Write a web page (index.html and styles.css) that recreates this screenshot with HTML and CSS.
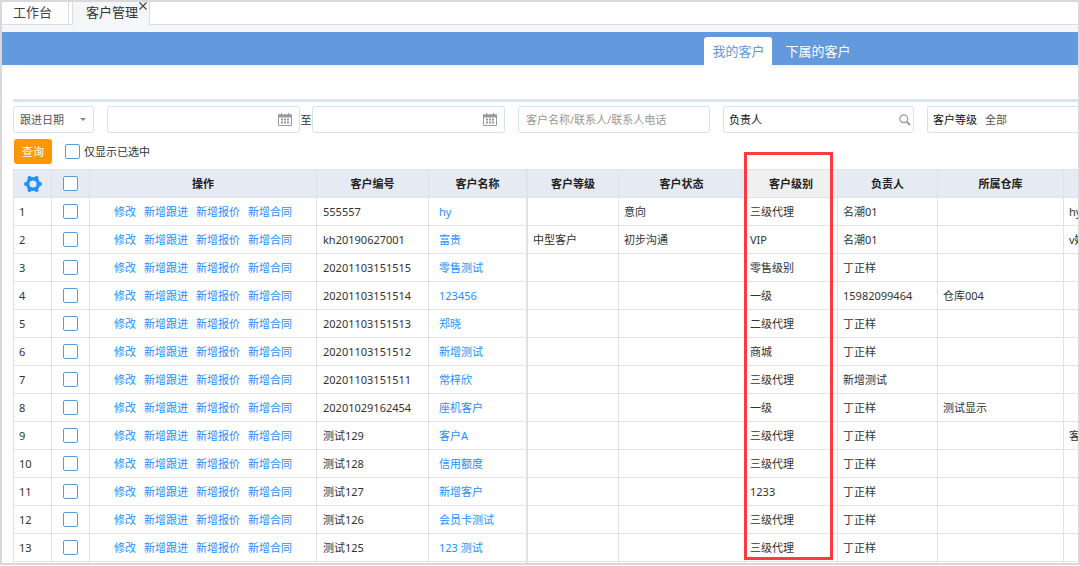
FILE: index.html
```html
<!DOCTYPE html>
<html lang="zh-CN">
<head>
<meta charset="utf-8">
<title>客户管理</title>
<link rel="stylesheet" href="styles.css">
</head>
<body>
<div class="window">
  <nav class="tabs">
    <a class="tab" href="#">工作台</a>
    <div class="tab tab-active"><a href="#">客户管理</a><button class="tab-close" type="button" aria-label="关闭"><svg viewBox="0 0 8 8" width="8" height="8"><path d="M.5.5l7 7M7.5.5l-7 7" stroke="#444" stroke-width="1.200" fill="none"/></svg></button></div>
  </nav>
  <nav class="banner">
    <a class="view view-active" href="#">我的客户</a>
    <a class="view" href="#">下属的客户</a>
  </nav>
  <main class="content">
    <form class="filters">
      <div class="field kind"><select class="kind-select" aria-label="日期类型"><option>跟进日期</option></select><span class="caret"></span></div>
      <label class="field date"><input type="text" aria-label="开始日期"><svg class="cal" viewBox="0 0 14 13" width="14" height="13"><path d="M.5 2h13v10.500h-13z" fill="none" stroke="#999"/><path d="M0 1.500h14V4.500H0zM3 0h1v2H3zM10 0h1v2h-1z" fill="#999"/><path d="M3 6.500h8M3 9.500h8" stroke="#999" stroke-width="2" stroke-dasharray="2 1" fill="none"/></svg></label>
      <span class="to">至</span>
      <label class="field date"><input type="text" aria-label="结束日期"><svg class="cal" viewBox="0 0 14 13" width="14" height="13"><path d="M.5 2h13v10.500h-13z" fill="none" stroke="#999"/><path d="M0 1.500h14V4.500H0zM3 0h1v2H3zM10 0h1v2h-1z" fill="#999"/><path d="M3 6.500h8M3 9.500h8" stroke="#999" stroke-width="2" stroke-dasharray="2 1" fill="none"/></svg></label>
      <div class="field keyword"><input type="text" aria-label="关键字" placeholder="客户名称/联系人/联系人电话"></div>
      <label class="field owner"><span>负责人</span><input type="text"><svg class="search" viewBox="0 0 12 12" width="12" height="12"><circle cx="4.700" cy="4.700" r="3.900" fill="none" stroke="#999" stroke-width="1.200"/><path d="M7.600 7.600l3.400 3.400" stroke="#999" stroke-width="2" fill="none"/></svg></label>
      <label class="field level"><span>客户等级</span><input type="text" value="全部"></label>
    </form>
    <div class="actions">
      <button class="query" type="button">查询</button>
      <label class="only"><input type="checkbox">仅显示已选中</label>
    </div>
    <div class="grid">
      <table>
        <colgroup><col class="w-no"><col class="w-check"><col class="w-ops"><col class="w-code"><col class="w-name"><col class="w-level"><col class="w-state"><col class="w-grade"><col class="w-owner"><col class="w-store"><col class="w-rest"></colgroup>
        <thead>
          <tr><th><button class="gear" type="button" aria-label="设置"><svg viewBox="0 0 18 18" width="18" height="18"><g fill="none" stroke="#1e90ff"><circle cx="9" cy="9" r="5.300" stroke-width="3.400"/><path stroke-width="4" stroke-linecap="round" d="M5.500 3l.6 1M12.500 3l-.6 1M2 9h1M16 9h-1M5.500 15l.6-1M12.500 15l-.6-1"/></g></svg></button></th><th><input type="checkbox" aria-label="全选"></th><th>操作</th><th>客户编号</th><th>客户名称</th><th>客户等级</th><th>客户状态</th><th class="marked">客户级别<span class="marker"></span></th><th>负责人</th><th>所属仓库</th><th></th></tr>
        </thead>
        <tbody>
          <tr><td>1</td><td><input type="checkbox" aria-label="选择第1行"></td><td><a href="#">修改</a><a href="#">新增跟进</a><a href="#">新增报价</a><a href="#">新增合同</a></td><td>555557</td><td><a href="#">hy</a></td><td></td><td>意向</td><td>三级代理</td><td>名潮01</td><td></td><td>hy</td></tr>
          <tr><td>2</td><td><input type="checkbox" aria-label="选择第2行"></td><td><a href="#">修改</a><a href="#">新增跟进</a><a href="#">新增报价</a><a href="#">新增合同</a></td><td>kh20190627001</td><td><a href="#">富贵</a></td><td>中型客户</td><td>初步沟通</td><td>VIP</td><td>名潮01</td><td></td><td>v姣</td></tr>
          <tr><td>3</td><td><input type="checkbox" aria-label="选择第3行"></td><td><a href="#">修改</a><a href="#">新增跟进</a><a href="#">新增报价</a><a href="#">新增合同</a></td><td>20201103151515</td><td><a href="#">零售测试</a></td><td></td><td></td><td>零售级别</td><td>丁正样</td><td></td><td></td></tr>
          <tr><td>4</td><td><input type="checkbox" aria-label="选择第4行"></td><td><a href="#">修改</a><a href="#">新增跟进</a><a href="#">新增报价</a><a href="#">新增合同</a></td><td>20201103151514</td><td><a href="#">123456</a></td><td></td><td></td><td>一级</td><td>15982099464</td><td>仓库004</td><td></td></tr>
          <tr><td>5</td><td><input type="checkbox" aria-label="选择第5行"></td><td><a href="#">修改</a><a href="#">新增跟进</a><a href="#">新增报价</a><a href="#">新增合同</a></td><td>20201103151513</td><td><a href="#">郑晓</a></td><td></td><td></td><td>二级代理</td><td>丁正样</td><td></td><td></td></tr>
          <tr><td>6</td><td><input type="checkbox" aria-label="选择第6行"></td><td><a href="#">修改</a><a href="#">新增跟进</a><a href="#">新增报价</a><a href="#">新增合同</a></td><td>20201103151512</td><td><a href="#">新增测试</a></td><td></td><td></td><td>商城</td><td>丁正样</td><td></td><td></td></tr>
          <tr><td>7</td><td><input type="checkbox" aria-label="选择第7行"></td><td><a href="#">修改</a><a href="#">新增跟进</a><a href="#">新增报价</a><a href="#">新增合同</a></td><td>20201103151511</td><td><a href="#">常梓欣</a></td><td></td><td></td><td>三级代理</td><td>新增测试</td><td></td><td></td></tr>
          <tr><td>8</td><td><input type="checkbox" aria-label="选择第8行"></td><td><a href="#">修改</a><a href="#">新增跟进</a><a href="#">新增报价</a><a href="#">新增合同</a></td><td>20201029162454</td><td><a href="#">座机客户</a></td><td></td><td></td><td>一级</td><td>丁正样</td><td>测试显示</td><td></td></tr>
          <tr><td>9</td><td><input type="checkbox" aria-label="选择第9行"></td><td><a href="#">修改</a><a href="#">新增跟进</a><a href="#">新增报价</a><a href="#">新增合同</a></td><td>测试129</td><td><a href="#">客户A</a></td><td></td><td></td><td>三级代理</td><td>丁正样</td><td></td><td>客</td></tr>
          <tr><td>10</td><td><input type="checkbox" aria-label="选择第10行"></td><td><a href="#">修改</a><a href="#">新增跟进</a><a href="#">新增报价</a><a href="#">新增合同</a></td><td>测试128</td><td><a href="#">信用额度</a></td><td></td><td></td><td>三级代理</td><td>丁正样</td><td></td><td></td></tr>
          <tr><td>11</td><td><input type="checkbox" aria-label="选择第11行"></td><td><a href="#">修改</a><a href="#">新增跟进</a><a href="#">新增报价</a><a href="#">新增合同</a></td><td>测试127</td><td><a href="#">新增客户</a></td><td></td><td></td><td>1233</td><td>丁正样</td><td></td><td></td></tr>
          <tr><td>12</td><td><input type="checkbox" aria-label="选择第12行"></td><td><a href="#">修改</a><a href="#">新增跟进</a><a href="#">新增报价</a><a href="#">新增合同</a></td><td>测试126</td><td><a href="#">会员卡测试</a></td><td></td><td></td><td>三级代理</td><td>丁正样</td><td></td><td></td></tr>
          <tr><td>13</td><td><input type="checkbox" aria-label="选择第13行"></td><td><a href="#">修改</a><a href="#">新增跟进</a><a href="#">新增报价</a><a href="#">新增合同</a></td><td>测试125</td><td><a href="#">123 测试</a></td><td></td><td></td><td>三级代理</td><td>丁正样</td><td></td><td></td></tr>
          <tr><td></td><td></td><td></td><td></td><td></td><td></td><td></td><td></td><td></td><td></td><td></td></tr>
        </tbody>
      </table>
    </div>
  </main>
</div>
</body>
</html>
```
FILE: styles.css
```css
* { box-sizing: border-box; }

body {
  margin: 0;
  font: 11px/16px "Noto Sans", "Noto Sans CJK SC", sans-serif;
  color: #333;
}

a { color: #1e90ff; text-decoration: none; }

button {
  border: 0;
  padding: 0;
  background: none;
  font: inherit;
}

input[type="text"] {
  flex: 1;
  min-width: 0;
  width: 100%;
  border: 0;
  padding: 0;
  background: none;
  font: inherit;
  color: #555;
  outline: 0;
}

input::placeholder { color: #999; }

input[type="checkbox"] {
  appearance: none;
  display: block;
  width: 15px;
  height: 15px;
  margin: 0;
  border: 1px solid #5b9ae0;
  border-radius: 2px;
  background: #fff;
}

.window {
  height: calc(100vh - 1px);
  overflow: hidden;
  border: 2px solid #d9d9d9;
  background: #fff;
}

/* Page tabs */
.tabs {
  display: flex;
  gap: 3px;
  height: 23px;
  border-bottom: 1px solid #ddd;
}

.tab {
  display: flex;
  height: 22px;
  padding: 0 16px 0 11px;
  border-right: 1px solid #ddd;
  font-size: 13px;
  line-height: 20px;
  color: #444;
}

.tab-active {
  height: 23px;
  padding: 0 2px 0 13px;
  border-left: 1px solid #ddd;
  background: #f5f6fa;
}

.tab-active a { color: #333; }

.tab-close {
  width: 8px;
  height: 8px;
  margin-left: 1px;
  line-height: 0;
}

/* Blue view switcher */
.banner {
  display: flex;
  justify-content: flex-start;
  height: 43px;
  padding: 5px 0 0 calc(65% + 3px);
  border-top: 7px solid #f5f6fa;
  border-bottom: 3px solid #f5f6fa;
  background: #629add;
}

.view {
  height: 28px;
  padding: 0 8px;
  border-radius: 3px 3px 0 0;
  font-size: 13px;
  line-height: 28px;
  color: #fff;
}

.view + .view { margin-left: 5px; }

.view-active {
  height: 31px;
  background: #fff;
  color: #629add;
}

.content { padding: 31px 0 0 11px; }

/* Filters */
.filters {
  display: flex;
  align-items: center;
  padding-top: 4px;
  border-top: 3px solid #d8e4ef;
}

.field {
  display: flex;
  flex: none;
  align-items: center;
  height: 27px;
  padding: 0 7px;
  border: 1px solid #d5e3f0;
  border-radius: 3px;
}

.kind {
  width: 81px;
  margin-right: 13px;
  padding: 0 7px 0 6px;
}

.kind-select {
  flex: 1;
  min-width: 0;
  appearance: none;
  border: 0;
  padding: 0;
  background: none;
  font: inherit;
  color: #555;
}

.caret {
  border: 3px solid transparent;
  border-top-color: #888;
  border-bottom: 0;
}

.date { width: 193px; }
.to { width: 12px; text-align: center; }
.keyword { width: 192px; margin: 0 13px; }

.owner {
  width: 191px;
  margin-right: 13px;
  padding: 0 2px 0 5px;
  color: #111;
}

.level {
  flex: 1;
  gap: 8px;
  padding-left: 5px;
  border-right: 0;
  border-radius: 3px 0 0 3px;
  color: #111;
}

.actions {
  display: flex;
  align-items: center;
  gap: 13px;
  padding: 6px 0 5px 1px;
}

.query {
  width: 38px;
  height: 25px;
  border-radius: 3px;
  background: #ff9800;
  color: #fff;
}

.only {
  display: flex;
  align-items: center;
  gap: 4px;
}

/* Customer table */
table {
  width: 1178px;
  table-layout: fixed;
  border-spacing: 0;
  border-top: 1px solid #e0e2e7;
  border-left: 1px solid #e0e2e7;
}

.w-no { width: 38px; }
.w-check { width: 38px; }
.w-ops { width: 227px; }
.w-code { width: 112px; }
.w-name { width: 99px; }
.w-level { width: 91px; }
.w-state { width: 126px; }
.w-grade { width: 93px; }
.w-owner { width: 100px; }
.w-store { width: 126px; }

th, td {
  height: 28px;
  padding: 0 5px;
  border-right: 1px solid #e0e2e7;
  border-bottom: 1px solid #e0e2e7;
  text-align: left;
  white-space: nowrap;
}

th {
  background: #e6eaf2;
  color: #222;
  text-align: center;
}

th:nth-child(5), td:nth-child(5) { border-right-width: 2px; }
th:nth-child(2), td:nth-child(2) { padding: 0 11px; }
td:nth-child(3) { padding-left: 24px; }
td:nth-child(4) { padding-left: 6px; }
td:nth-child(5) { padding-left: 10px; }
td:nth-child(3) a + a { margin-left: 8px; }

th.marked {
  position: relative;
  background: #f0f0f0;
}

/* Red outline around the highlighted column */
.marker {
  position: absolute;
  top: -18px;
  left: -1px;
  width: 89px;
  height: 408px;
  border: 3px solid #fa3c3c;
  pointer-events: none;
}

.gear {
  display: block;
  margin: 0 auto;
  line-height: 0;
}
```
